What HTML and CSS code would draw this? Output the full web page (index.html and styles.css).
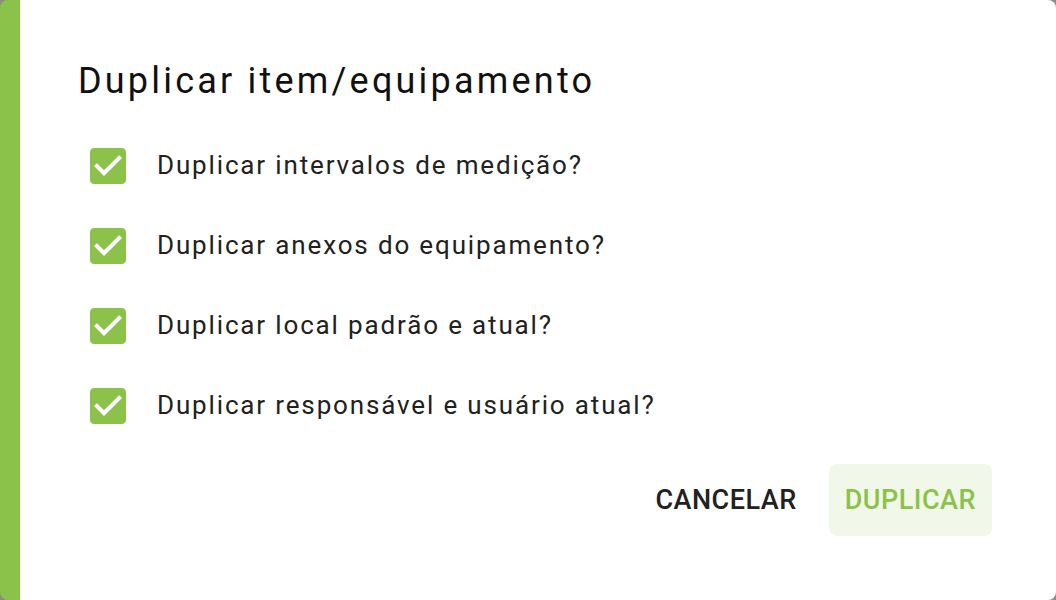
FILE: index.html
```html
<!DOCTYPE html>
<html lang="pt">
<head>
<meta charset="utf-8">
<title>Duplicar item/equipamento</title>
<link rel="stylesheet" href="styles.css">
</head>
<body>
<div class="dialog">
  <h2 class="title">Duplicar item/equipamento</h2>
  <div class="options">
    <label class="option">
      <svg class="check" viewBox="0 0 24 24"><path d="M19 3H5c-1.11 0-2 .9-2 2v14c0 1.1.89 2 2 2h14c1.11 0 2-.9 2-2V5c0-1.1-.89-2-2-2zm-9 14l-5-5 1.41-1.41L10 14.17l7.59-7.59L19 8l-9 9z"/></svg>
      <span class="label">Duplicar intervalos de medição?</span>
    </label>
    <label class="option">
      <svg class="check" viewBox="0 0 24 24"><path d="M19 3H5c-1.11 0-2 .9-2 2v14c0 1.1.89 2 2 2h14c1.11 0 2-.9 2-2V5c0-1.1-.89-2-2-2zm-9 14l-5-5 1.41-1.41L10 14.17l7.59-7.59L19 8l-9 9z"/></svg>
      <span class="label">Duplicar anexos do equipamento?</span>
    </label>
    <label class="option">
      <svg class="check" viewBox="0 0 24 24"><path d="M19 3H5c-1.11 0-2 .9-2 2v14c0 1.1.89 2 2 2h14c1.11 0 2-.9 2-2V5c0-1.1-.89-2-2-2zm-9 14l-5-5 1.41-1.41L10 14.17l7.59-7.59L19 8l-9 9z"/></svg>
      <span class="label">Duplicar local padrão e atual?</span>
    </label>
    <label class="option">
      <svg class="check" viewBox="0 0 24 24"><path d="M19 3H5c-1.11 0-2 .9-2 2v14c0 1.1.89 2 2 2h14c1.11 0 2-.9 2-2V5c0-1.1-.89-2-2-2zm-9 14l-5-5 1.41-1.41L10 14.17l7.59-7.59L19 8l-9 9z"/></svg>
      <span class="label">Duplicar responsável e usuário atual?</span>
    </label>
  </div>
  <div class="actions">
    <button class="btn btn-cancel">Cancelar</button>
    <button class="btn btn-primary">Duplicar</button>
  </div>
</div>
</body>
</html>
```
FILE: styles.css
```css
html, body {
  margin: 0;
  padding: 0;
  background: #8a8a8a;
}
body {
  font-family: Roboto, "Liberation Sans", Arial, sans-serif;
}
.dialog {
  width: 1056px;
  height: 600px;
  box-sizing: border-box;
  background: #fff;
  border-left: 20px solid #8bc34a;
  border-radius: 8px;
  padding: 53px 64px 0 58px;
  display: flex;
  flex-direction: column;
}
.title {
  margin: 0;
  font-size: 36px;
  font-weight: 400;
  line-height: 57.6px;
  letter-spacing: 3.2px;
  color: #111;
}
.options {
  margin-top: 15px;
  display: flex;
  flex-direction: column;
  padding-left: 6px;
}
.option {
  height: 80px;
  display: flex;
  align-items: center;
  gap: 25px;
}
.check {
  width: 48px;
  height: 48px;
  fill: #8bc34a;
  flex: none;
}
.label {
  font-size: 26px;
  line-height: 36px;
  letter-spacing: 1.85px;
  color: #212121;
  position: relative;
  top: -1px;
}
.actions {
  margin-top: 18px;
  display: flex;
  justify-content: flex-end;
  gap: 16px;
}
.btn {
  font-family: Roboto, "Liberation Sans", Arial, sans-serif;
  font-size: 27px;
  font-weight: 500;
  letter-spacing: 0.5px;
  text-transform: uppercase;
  line-height: 48px;
  padding: 12px 16px;
  border: none;
  border-radius: 8px;
  background: transparent;
  min-width: 128px;
}
.btn-cancel {
  color: #212121;
}
.btn-primary {
  color: #8bc34a;
  background: #f1f8e9;
}
```
